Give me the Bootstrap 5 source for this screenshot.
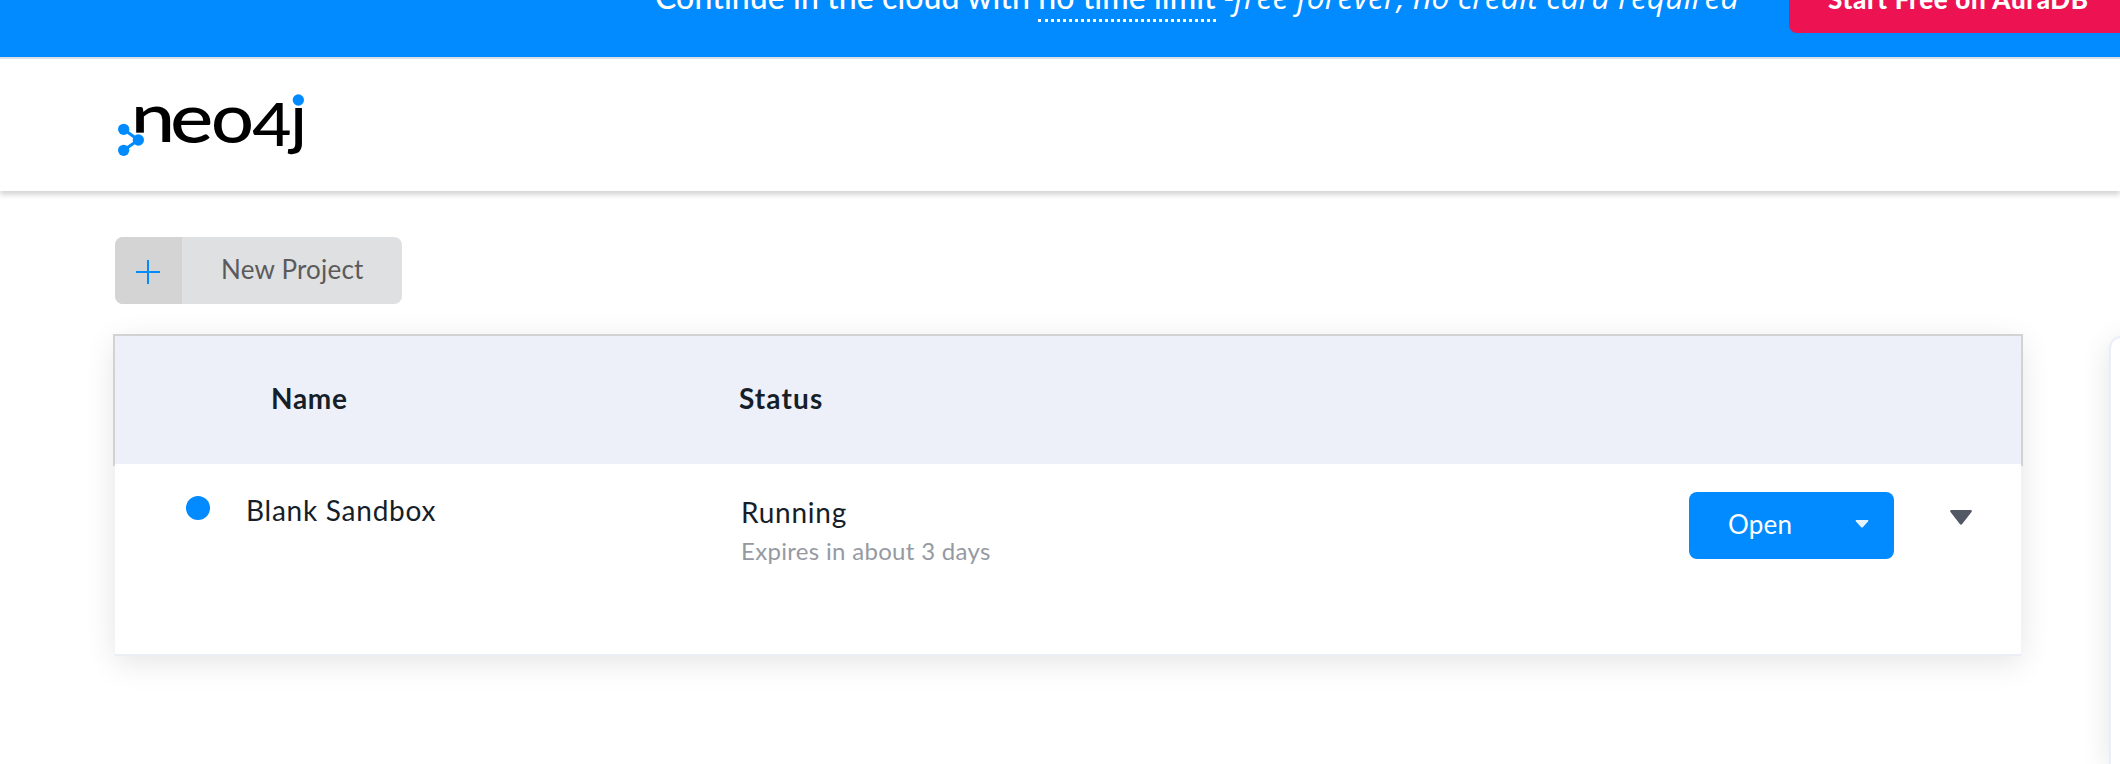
<!DOCTYPE html>
<html lang="en">
<head>
<meta charset="utf-8">
<meta name="viewport" content="width=device-width, initial-scale=1">
<title>Neo4j Sandbox</title>
<link href="https://cdn.jsdelivr.net/npm/bootstrap@5.3.0/dist/css/bootstrap.min.css" rel="stylesheet">
<style>
  body{font-family:Lato,"Open Sans",sans-serif;color:#151e29;background:#fff;height:764px;overflow:hidden}
  .promo{height:57px;background:#018bff;overflow:hidden}
  .promo-row{height:72px;margin-top:-39px;padding-left:655px}
  .promo-text{width:1134px;font-size:32px;font-weight:500;line-height:40px;letter-spacing:.1px;white-space:nowrap;padding-top:16px}
  .promo-text u{text-decoration:none;border-bottom:3px dotted #fff;padding-bottom:3px}
  .promo-text em{font-family:"Open Sans",sans-serif;letter-spacing:0}
  .btn-aura{width:400px;height:72px;border-radius:8px;background:#ed1252;color:#fff;font-size:26px;font-weight:900;letter-spacing:.67px;line-height:36px;padding:20px 0 0 39px;white-space:nowrap}
  .topbar{height:134px;border-top:2px solid #dcdfe3;background:#fff;box-shadow:0 4px 5px rgba(0,0,0,.16);padding:34px 0 0 117px}
  .topbar svg{display:block;overflow:visible}
  .page-main{padding:46px 0 0 115px}
  .btn-new{width:287px;height:67px;border-radius:8px;background:#dfe0e2;color:#5b5b5b;font-size:26px;letter-spacing:.2px;overflow:hidden}
  .btn-new .plus{width:67px;background:#d4d4d4}
  .btn-new .plus svg{margin:23px 0 0 -1px}
  .btn-new .cap{padding-left:39px;line-height:64px}
  .projects{width:1906px;height:320px;margin-top:32px;background:#fff;box-shadow:0 6px 30px rgba(0,0,0,.11);border-bottom:2px solid #ebeff5}
  .projects-head{height:128px;background:#edf0f9;position:relative}
  .projects-head::before{content:"";position:absolute;left:-2px;right:-2px;top:-2px;bottom:-2px;border:2px solid #d2d2d2;border-bottom:0}
  .projects-head div{font-size:28px;font-weight:700;line-height:34px;padding-top:45px}
  .head-name{width:624px;padding-left:156px;letter-spacing:.7px}
  .head-status{letter-spacing:1.1px}
  .row-name{width:626px;flex:none;padding:28px 0 0 71px}
  .row-name .row-label{margin:1px 0 0 36px}
  .row-status{padding-top:31px}
  .state-dot{width:24px;height:24px;border-radius:50%;background:#018bff;margin-top:4px}
  .row-label{font-size:28px;line-height:34px;white-space:nowrap;letter-spacing:.75px}
  .expiry{font-size:24px;line-height:30px;color:#959aa2;letter-spacing:.31px;margin-top:7px}
  .btn-open{width:205px;height:67px;border-radius:8px;background:#018bff;color:#fff;font-size:26px;letter-spacing:.22px;line-height:64px;padding:0 25px 0 39px;margin-top:28px}
  .btn-open svg{margin-top:28px}
  .row-toggle{margin:46px 49px 0 56px}
  .aside{width:60px;height:428px;margin:32px 0 0 88px;background:#fff;border:2px solid #eaeefa;border-bottom:0;border-radius:12px 0 0 0;box-shadow:0 6px 30px rgba(0,0,0,.11)}
</style>
</head>
<body>
<div class="promo">
  <div class="promo-row d-flex">
    <div class="promo-text text-white flex-shrink-0">Continue in the cloud with <u>no time limit</u> <em>-free forever, no credit card required</em></div>
    <a class="btn-aura flex-shrink-0 text-decoration-none" href="#">Start Free on AuraDB</a>
  </div>
</div>

<header class="topbar">
  <svg width="188" height="64" viewBox="51 39 564 192" role="img" aria-label="neo4j">
    <g fill="#000" font-family="Lato" font-weight="500" font-size="206">
      <text x="92" y="187" textLength="133" lengthAdjust="spacingAndGlyphs">n</text>
      <text x="210" y="188" textLength="130" lengthAdjust="spacingAndGlyphs">e</text>
      <text x="333" y="188" textLength="129" lengthAdjust="spacingAndGlyphs">o</text>
      <text x="457" y="197" font-size="182" textLength="118" lengthAdjust="spacingAndGlyphs">4</text>
      <text x="571" y="183">j</text>
    </g>
    <path d="M562 10H630V84H562Z" fill="#fff"/>
    <circle cx="595" cy="60" r="17" fill="#018bff"/>
    <path d="M98 158H132V196H98Z" fill="#fff"/>
    <path d="M71 148 115 180 71 211" fill="none" stroke="#018bff" stroke-width="9"/>
    <g fill="#018bff"><circle cx="71" cy="148" r="17"/><circle cx="115" cy="180" r="17"/><circle cx="71" cy="211" r="17"/></g>
  </svg>
</header>

<main class="page-main">
  <button class="btn-new d-flex border-0 p-0">
    <span class="plus h-100 d-flex justify-content-center"><svg width="24" height="24" viewBox="0 0 24 24"><path d="M12 0V24M0 12H24" stroke="#018bff" stroke-width="2"/></svg></span>
    <span class="cap">New Project</span>
  </button>

  <div class="d-flex">
    <section class="projects flex-shrink-0">
      <div class="projects-head d-flex">
        <div class="head-name">Name</div>
        <div class="head-status">Status</div>
      </div>
      <div class="d-flex">
        <div class="row-name d-flex">
          <span class="state-dot"></span>
          <span class="row-label">Blank Sandbox</span>
        </div>
        <div class="row-status flex-grow-1">
          <div class="row-label">Running</div>
          <div class="expiry">Expires in about 3 days</div>
        </div>
        <button class="btn-open border-0 d-flex justify-content-between">
          <span>Open</span>
          <svg width="14" height="8" viewBox="0 0 14 8"><path d="M1.2 0H12.8Q14 .4 13 1.5L8 7Q7 8 6 7L1 1.5Q0 .4 1.2 0Z" fill="#e6f3ff"/></svg>
        </button>
        <svg class="row-toggle" width="22" height="15" viewBox="0 0 22 15"><path d="M1 0H21Q22.500 .5 21.500 2L12.200 14Q11 15.600 9.800 14L.5 2Q-.5 .5 1 0Z" fill="#535865"/></svg>
      </div>
    </section>
    <aside class="aside flex-shrink-0"></aside>
  </div>
</main>
<script src="https://cdn.jsdelivr.net/npm/bootstrap@5.3.0/dist/js/bootstrap.bundle.min.js"></script>
</body>
</html>
